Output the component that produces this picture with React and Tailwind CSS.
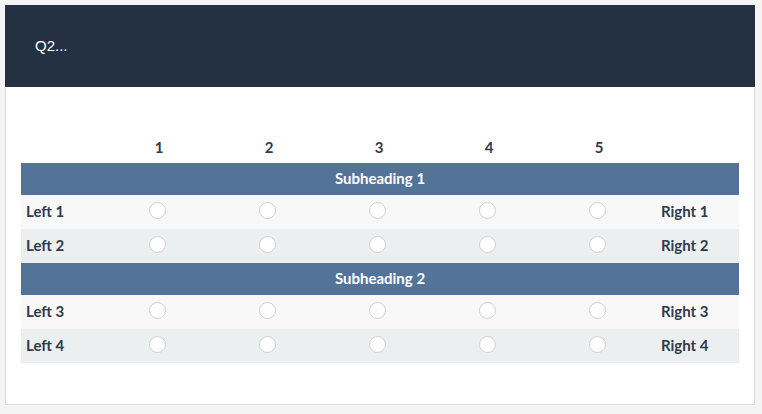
import React from 'react';

const columns = [1, 2, 3, 4, 5];

const groups = [
  { title: 'Subheading 1', rows: [['Left 1', 'Right 1'], ['Left 2', 'Right 2']] },
  { title: 'Subheading 2', rows: [['Left 3', 'Right 3'], ['Left 4', 'Right 4']] },
];

const gridCols = 'grid grid-cols-[83px_repeat(5,110px)_1fr]';

const Radio = () => (
  <span className="block w-[17px] h-[17px] rounded-full border border-[#cfcfcf] bg-white" />
);

const App = () => {
  return (
    <div className="min-h-[414px] bg-[#f4f4f4] p-[5px] font-['Lato','Noto_Sans',sans-serif]">
      <div className="w-[750px]">
        <div className="h-[82px] bg-[#243142] flex items-center pl-[30px]">
          <span className="text-white text-[15px] font-['Liberation_Sans',Arial,sans-serif]">Q2...</span>
        </div>
        <div className="bg-white border-x border-b border-[#dcdcdc] px-[15px] pt-[46px] pb-[41px]">
          <div className={`${gridCols} h-[30px] items-center text-[15px] leading-[18px] pb-[3px] font-bold text-[#2f3a4a]`}>
            <div />
            {columns.map((c) => (
              <div key={c} className="text-center">{c}</div>
            ))}
            <div />
          </div>

          {groups.map((group) => (
            <div key={group.title}>
              <div className="h-8 bg-[#537399] flex items-center justify-center pb-[3px] text-white text-[15px] leading-[18px] font-bold">
                {group.title}
              </div>
              {group.rows.map(([left, right], i) => (
                <div
                  key={left}
                  className={`${gridCols} h-[34px] items-center text-[15px] leading-[18px] font-bold text-[#2f3a4a] ${
                    i === 0 ? 'bg-[#f8f8f8]' : 'bg-[#eceff0]'
                  }`}
                >
                  <div className="pl-[5px] pb-[3px]">{left}</div>
                  {columns.map((c) => (
                    <div key={c} className="flex justify-center pb-[3px] pr-[4px]">
                      <Radio />
                    </div>
                  ))}
                  <div className="pl-[7px] pb-[3px]">{right}</div>
                </div>
              ))}
            </div>
          ))}
        </div>
      </div>
    </div>
  );
};

export default App;
